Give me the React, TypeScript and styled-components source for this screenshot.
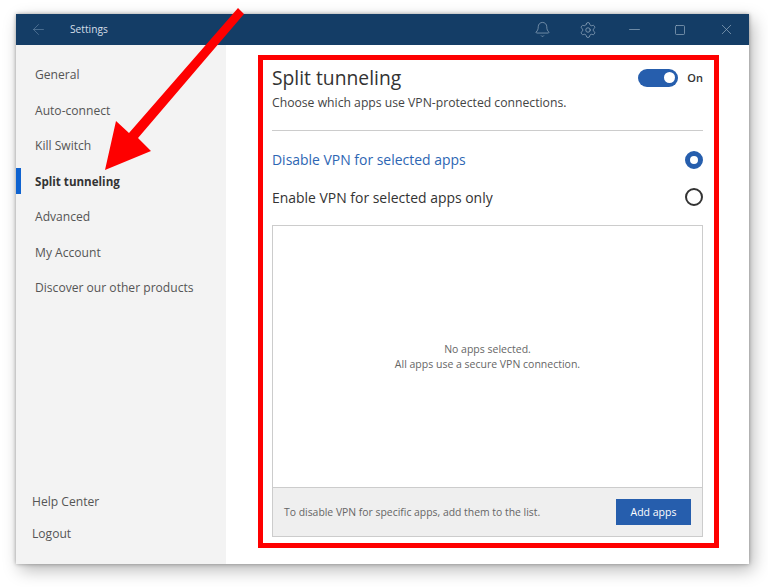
import React from 'react'
import styled, { createGlobalStyle } from 'styled-components'
import { ArrowLeft, Bell, Minus, Settings, Square, X } from 'lucide-react'

const GlobalStyle = createGlobalStyle`
  html, body {
    margin: 0;
    background: #fff;
  }
  body {
    width: 768px;
    height: 587px;
    overflow: hidden;
    font-family: "Open Sans", "Noto Sans", sans-serif;
  }
`

const Page = styled.div`
  position: relative;
  width: 768px;
  height: 587px;
  padding: 14px 19px 23px 16px;
  box-sizing: border-box;
`

const Window = styled.div`
  display: flex;
  flex-direction: column;
  height: 100%;
  box-shadow: 0 0 4px rgba(0, 0, 0, 0.35), 4px 6px 16px rgba(0, 0, 0, 0.28);
`

const TitleBar = styled.header`
  display: flex;
  align-items: center;
  height: 31px;
  flex: none;
  background: #143d66;
  color: #94aabf;
`

const BackButton = styled.div`
  display: flex;
  width: 46px;
  padding-left: 14px;
  box-sizing: border-box;
  color: #5f80a0;
`

const WindowTitle = styled.span`
  flex: 1;
  margin-left: 8px;
  margin-top: -2px;
  font-size: 10.2px;
  color: #d5dfe8;
`

const IconSlot = styled.div<{ $width: number }>`
  display: flex;
  justify-content: center;
  width: ${({ $width }) => $width}px;
`

const Body = styled.div`
  display: flex;
  flex: 1;
  min-height: 0;
`

const Sidebar = styled.nav`
  display: flex;
  flex-direction: column;
  width: 210px;
  flex: none;
  padding: 12px 0 15px;
  box-sizing: border-box;
  background: #f3f3f3;
`

const NavItem = styled.div<{ $active?: boolean }>`
  display: flex;
  align-items: center;
  height: 35.5px;
  padding-left: ${({ $active }) => ($active ? 0 : 19)}px;
  font-size: ${({ $active }) => ($active ? 11.6 : 12.1)}px;
  font-weight: ${({ $active }) => ($active ? 700 : 400)};
  color: ${({ $active }) => ($active ? '#333' : '#555')};

  ${({ $active }) =>
    $active &&
    `
    &::before {
      content: '';
      width: 5px;
      height: 26px;
      margin-right: 14px;
      background: #0f63d0;
    }
  `}
`

const BottomLinks = styled.div`
  display: flex;
  flex-direction: column;
  margin-top: auto;
`

const BottomLink = styled.div`
  display: flex;
  align-items: center;
  height: 32px;
  padding-left: 16px;
  font-size: 12.1px;
  color: #555;
`

const Main = styled.main`
  display: flex;
  flex-direction: column;
  flex: 1;
  padding: 0 46px 27px;
  background: #fff;
`

const Heading = styled.div`
  display: flex;
  align-items: center;
  justify-content: space-between;
  height: 35px;
  margin-top: 15px;
`

const Title = styled.h1`
  margin: 0;
  font-size: 19.3px;
  font-weight: 400;
  color: #333;
`

const ToggleGroup = styled.div`
  display: flex;
  align-items: center;
  gap: 9px;
`

const Toggle = styled.div`
  display: flex;
  align-items: center;
  justify-content: flex-end;
  width: 40px;
  height: 18px;
  padding-right: 3px;
  box-sizing: border-box;
  border-radius: 9px;
  background: #265ead;
`

const ToggleKnob = styled.div`
  width: 11px;
  height: 11px;
  border-radius: 50%;
  background: #fff;
`

const ToggleLabel = styled.span`
  font-size: 11px;
  font-weight: 600;
  color: #333;
`

const Subtitle = styled.p`
  margin: 0;
  height: 35px;
  font-size: 12.2px;
  line-height: 16px;
  color: #444;
  border-bottom: 1px solid #ccc;
`

const Options = styled.div`
  display: flex;
  flex-direction: column;
  padding: 10px 0 9px;
`

const OptionRow = styled.div<{ $selected?: boolean }>`
  display: flex;
  align-items: center;
  justify-content: space-between;
  height: 37.5px;
  font-size: 13.95px;
  color: ${({ $selected }) => ($selected ? '#2d66b3' : '#333')};
`

const Radio = styled.div<{ $selected?: boolean }>`
  width: 18px;
  height: 18px;
  box-sizing: border-box;
  border-radius: 50%;
  border: ${({ $selected }) => ($selected ? '5.5px solid #265ead' : '2px solid #333')};
  background: #fff;
`

const AppList = styled.section`
  display: flex;
  flex-direction: column;
  flex: 1;
  border: 1px solid #ccc;
`

const EmptyState = styled.div`
  display: flex;
  flex-direction: column;
  align-items: center;
  justify-content: center;
  flex: 1;
  font-size: 10.5px;
  line-height: 15px;
  color: #666;
`

const ListFooter = styled.div`
  display: flex;
  align-items: center;
  justify-content: space-between;
  height: 49px;
  padding: 0 11px;
  box-sizing: border-box;
  border-top: 1px solid #ccc;
  background: #efefef;
`

const FooterNote = styled.span`
  font-size: 10.4px;
  color: #666;
`

const AddButton = styled.button`
  width: 75px;
  height: 26px;
  padding: 0;
  border: none;
  background: #265ead;
  color: #fff;
  font-family: inherit;
  font-size: 10.5px;
`

// red annotation drawn over the screenshot
const HighlightFrame = styled.div`
  position: absolute;
  left: 258px;
  top: 55px;
  width: 461px;
  height: 493px;
  box-sizing: border-box;
  border: 5px solid #fe0000;
`

const ArrowOverlay = styled.svg`
  position: absolute;
  left: 0;
  top: 0;
  pointer-events: none;
`

const navItems = ['General', 'Auto-connect', 'Kill Switch', 'Split tunneling', 'Advanced', 'My Account', 'Discover our other products']

export default function App() {
  return (
    <Page>
      <GlobalStyle />
      <Window>
        <TitleBar>
          <BackButton>
            <ArrowLeft size={17} strokeWidth={1} />
          </BackButton>
          <WindowTitle>Settings</WindowTitle>
          <IconSlot $width={46}>
            <Bell size={17} strokeWidth={1} />
          </IconSlot>
          <IconSlot $width={46}>
            <Settings size={18} strokeWidth={1} />
          </IconSlot>
          <IconSlot $width={46}>
            <Minus size={17} strokeWidth={1} />
          </IconSlot>
          <IconSlot $width={46}>
            <Square size={12} strokeWidth={1.4} />
          </IconSlot>
          <IconSlot $width={46}>
            <X size={17} strokeWidth={1} />
          </IconSlot>
        </TitleBar>
        <Body>
          <Sidebar>
            {navItems.map(item => (
              <NavItem key={item} $active={item === 'Split tunneling'}>
                {item}
              </NavItem>
            ))}
            <BottomLinks>
              <BottomLink>Help Center</BottomLink>
              <BottomLink>Logout</BottomLink>
            </BottomLinks>
          </Sidebar>
          <Main>
            <Heading>
              <Title>Split tunneling</Title>
              <ToggleGroup>
                <Toggle>
                  <ToggleKnob />
                </Toggle>
                <ToggleLabel>On</ToggleLabel>
              </ToggleGroup>
            </Heading>
            <Subtitle>Choose which apps use VPN-protected connections.</Subtitle>
            <Options>
              <OptionRow $selected>
                Disable VPN for selected apps
                <Radio $selected />
              </OptionRow>
              <OptionRow>
                Enable VPN for selected apps only
                <Radio />
              </OptionRow>
            </Options>
            <AppList>
              <EmptyState>
                <span>No apps selected.</span>
                <span>All apps use a secure VPN connection.</span>
              </EmptyState>
              <ListFooter>
                <FooterNote>To disable VPN for specific apps, add them to the list.</FooterNote>
                <AddButton>Add apps</AddButton>
              </ListFooter>
            </AppList>
          </Main>
        </Body>
      </Window>
      <HighlightFrame />
      <ArrowOverlay width="768" height="587" viewBox="0 0 768 587">
        <polygon fill="#fe0000" points="238,8 244,14 138,138 151,151 105,170 116,121 129,133" />
      </ArrowOverlay>
    </Page>
  )
}
